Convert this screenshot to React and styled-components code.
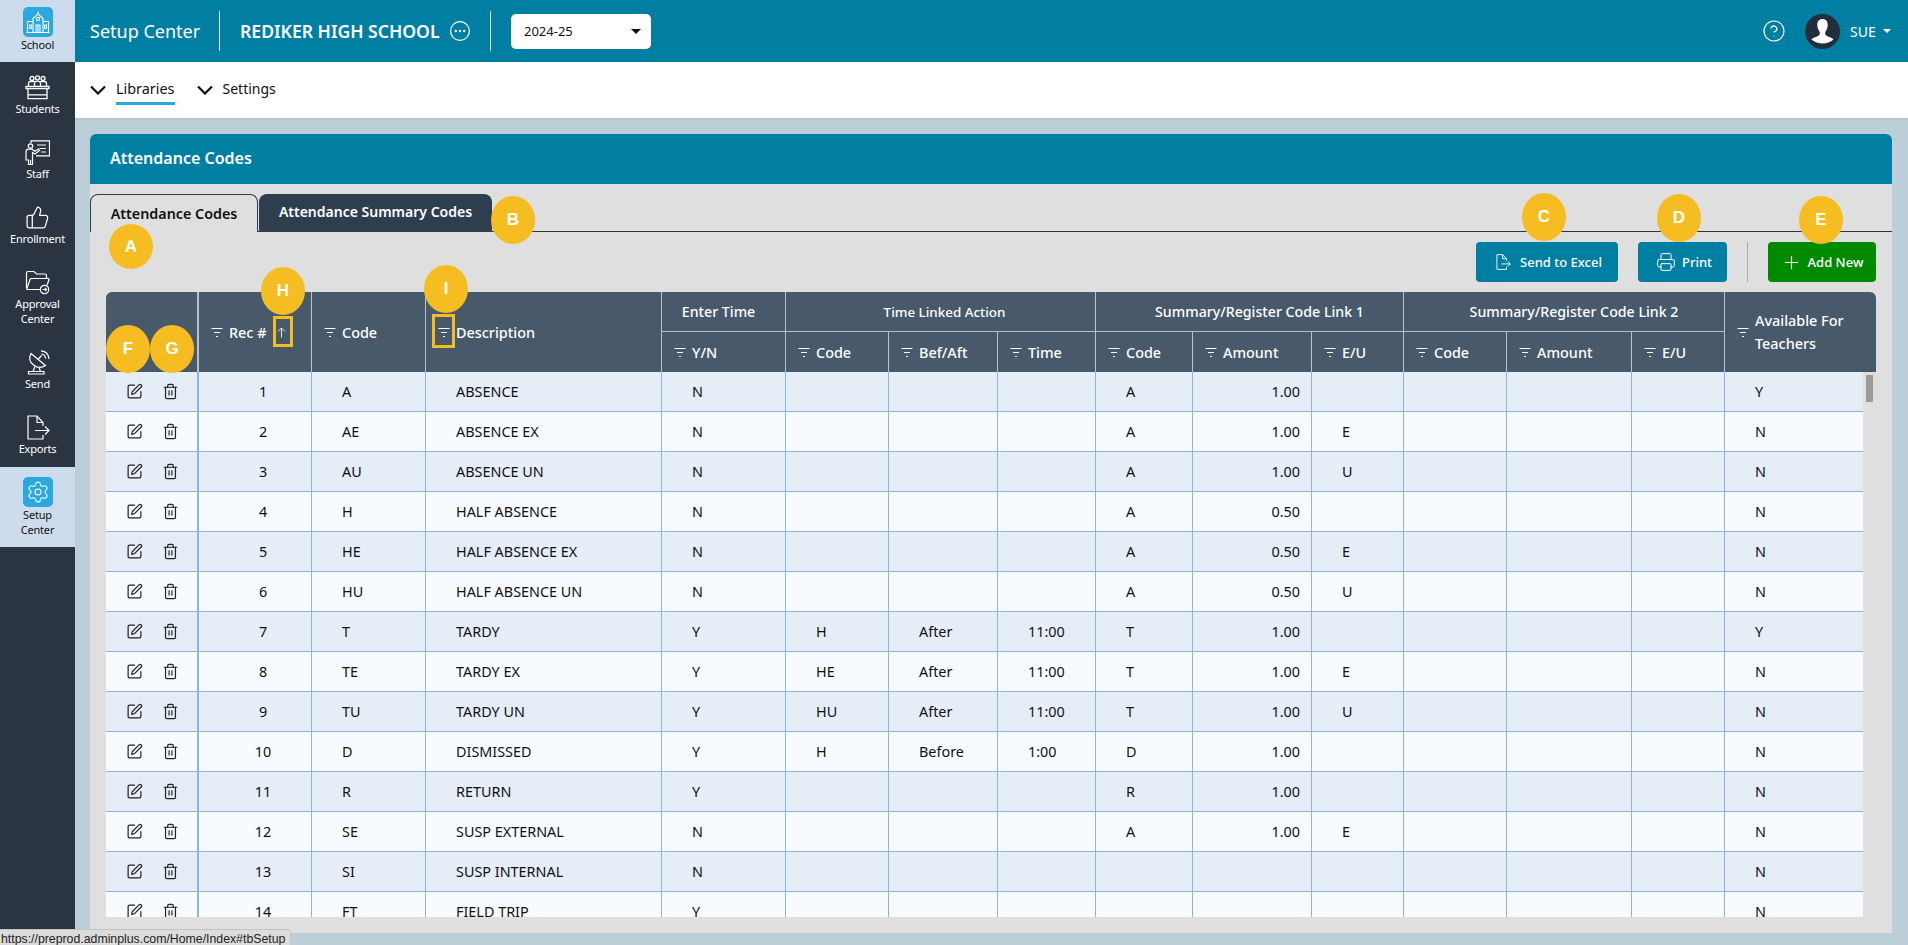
import React from 'react';
import styled, { createGlobalStyle } from 'styled-components';
import {
  CircleHelp,
  Plus,
  Printer,
  Settings,
  SquarePen,
  ThumbsUp,
  Trash2,
} from 'lucide-react';

const GlobalStyle = createGlobalStyle`
  html, body {
    margin: 0;
    padding: 0;
    height: 100%;
    overflow: hidden;
  }
  body {
    font-family: "Noto Sans", "Open Sans", sans-serif;
    font-size: 13px;
    color: #111;
  }
  * {
    box-sizing: border-box;
  }
`;

const Page = styled.div`
  position: relative;
  display: flex;
  width: 1908px;
  height: 945px;
  overflow: hidden;
  background: #bccfd8;
`;

const Sidebar = styled.nav`
  width: 75px;
  flex: none;
  background: #2a3541;
  display: flex;
  flex-direction: column;
`;

const NavItem = styled.div`
  display: flex;
  flex-direction: column;
  align-items: center;
  padding: ${p => (p.$top ? `${p.$top}px` : '13px')} 0 ${p => (p.$active ? 10 : 11)}px;
  background: ${p => (p.$active ? '#cddcec' : 'transparent')};
  color: ${p => (p.$active ? '#111' : '#fff')};
`;

const NavIconBox = styled.div`
  width: ${p => (p.$active ? 30 : 25)}px;
  height: ${p => (p.$active ? 30 : 25)}px;
  margin-bottom: ${p => (p.$active ? 0 : 1)}px;
  display: flex;
  align-items: center;
  justify-content: center;
  border-radius: 5px;
  color: #fff;
  background: ${p => (p.$active ? '#29a9e0' : 'transparent')};
`;

const NavLabel = styled.div`
  font-size: 11px;
  line-height: 15px;
  text-align: center;
  letter-spacing: -0.2px;
`;

const Main = styled.div`
  flex: 1;
  min-width: 0;
  display: flex;
  flex-direction: column;
`;

const TopBar = styled.header`
  height: 62px;
  flex: none;
  background: #007fa3;
  color: #fff;
  display: flex;
  align-items: center;
  padding: 0 17px 0 15px;
`;

const PageName = styled.div`
  font-size: 18px;
  width: 129px;
  white-space: nowrap;
`;

const BarDivider = styled.div`
  width: 1px;
  height: 40px;
  flex: none;
  background: #e6f2f6;
  margin: 0 ${p => p.$right}px 0 ${p => p.$left}px;
`;

const SchoolName = styled.div`
  font-size: 17.6px;
  font-weight: 600;
  width: 208px;
  white-space: nowrap;
`;

const YearSelect = styled.div`
  width: 140px;
  height: 35px;
  background: #fff;
  border-radius: 5px;
  color: #111;
  font-size: 13px;
  display: flex;
  align-items: center;
  justify-content: space-between;
  padding: 0 10px 0 13px;
`;

const Caret = styled.span`
  width: 0;
  height: 0;
  border-left: ${p => p.$size}px solid transparent;
  border-right: ${p => p.$size}px solid transparent;
  border-top: ${p => p.$size}px solid ${p => p.$color};
`;

const TopRight = styled.div`
  margin-left: auto;
  display: flex;
  align-items: center;
`;

const Avatar = styled.svg`
  width: 35px;
  height: 35px;
  margin: 0 10px 0 19px;
`;

const UserName = styled.span`
  font-size: 14px;
  width: 27px;
  margin-right: 6px;
  white-space: nowrap;
`;

const SubNav = styled.div`
  height: 58px;
  flex: none;
  background: #fff;
  border-bottom: 2px solid #b4c6cf;
  display: flex;
  align-items: flex-start;
  padding: 17px 0 0 15px;
  gap: 22px;
`;

const SubGroup = styled.div`
  display: flex;
  align-items: flex-start;
  gap: 10px;
`;

const Chevron = styled.svg`
  width: 16px;
  height: 10px;
  margin-top: 6px;
  flex: none;
`;

const SubLabel = styled.div`
  font-size: ${p => (p.$active ? 14.4 : 14)}px;
  line-height: 20px;
  height: 26px;
  color: #111;
  border-bottom: ${p => (p.$active ? '3px solid #29a9e0' : 'none')};
`;

const Content = styled.main`
  flex: 1;
  min-height: 0;
  padding: 14px 16px 12px 15px;
`;

const Panel = styled.section`
  height: 100%;
  background: #dfdfdf;
  display: flex;
  flex-direction: column;
  border-radius: 6px 6px 0 0;
  overflow: hidden;
`;

const PanelHead = styled.div`
  height: 50px;
  flex: none;
  background: #007fa3;
  color: #fff;
  font-size: 16px;
  font-weight: 600;
  display: flex;
  align-items: center;
  padding: 0 0 2px 20px;
`;

const TabBar = styled.div`
  height: 38px;
  flex: none;
  margin-top: 10px;
  display: flex;
  align-items: flex-end;
  gap: 1px;
  border-bottom: 1px solid #333;
`;

const Tab = styled.div`
  height: 38px;
  width: ${p => p.$width}px;
  margin-bottom: -1px;
  display: flex;
  justify-content: center;
  align-items: center;
  font-size: ${p => (p.$active ? 14.3 : 14)}px;
  font-weight: 600;
  white-space: nowrap;
  border-radius: 8px 8px 0 0;
  border: 1px solid #2e3e4f;
  border-bottom: none;
  background: ${p => (p.$active ? '#dfdfdf' : '#2e3e4f')};
  color: ${p => (p.$active ? '#111' : '#fff')};
  padding-bottom: ${p => (p.$active ? 0 : 4)}px;
`;

const Actions = styled.div`
  height: 40px;
  flex: none;
  margin-top: 10px;
  padding-right: 16px;
  display: flex;
  justify-content: flex-end;
  align-items: stretch;
`;

const ActionButton = styled.div`
  width: ${p => p.$width}px;
  background: ${p => (p.$green ? '#008a00' : '#007fa3')};
  color: #fff;
  border-radius: 4px;
  font-size: 13px;
  font-weight: 500;
  display: flex;
  align-items: center;
  justify-content: center;
  gap: ${p => p.$gap}px;
  padding-left: ${p => (p.$green ? 0 : 3)}px;
  margin-left: ${p => p.$left || 0}px;
`;

const ActionDivider = styled.div`
  width: 1px;
  background: #aaa;
  margin-left: 20px;
`;

const TableArea = styled.div`
  flex: 1;
  min-height: 0;
  margin: 10px 16px 16px;
  display: flex;
  flex-direction: column;
`;

const HeadTable = styled.table`
  width: 1770px;
  table-layout: fixed;
  border-collapse: separate;
  border-spacing: 0;
  background: #47596b;
  border-radius: 6px 6px 0 0;
  flex: none;
`;

const Th = styled.th`
  height: ${p => p.$height}px;
  padding: 0 0 0 12px;
  color: #fff;
  font-size: 14.4px;
  font-weight: 500;
  text-align: left;
  border-right: ${p => (p.$last ? 'none' : `${p.$wide ? 2 : 1}px solid #b9c1c9`)};
`;

const GroupTh = styled.th`
  height: 40px;
  padding: 0 ${p => (p.$shift < 0 ? -p.$shift : 0)}px 0 ${p => (p.$shift > 0 ? p.$shift : 0)}px;
  color: #fff;
  font-size: ${p => p.$size || 14.2}px;
  font-weight: 500;
  text-align: center;
  border-right: 1px solid #b9c1c9;
  border-bottom: 1px solid #b9c1c9;
`;

const ThInner = styled.div`
  display: flex;
  align-items: center;
  gap: 6px;
`;

const ThText = styled.span`
  line-height: 23px;
`;

const BodyWrap = styled.div`
  flex: 1;
  min-height: 0;
  overflow: hidden;
  position: relative;
  background: #dfdfdf;
`;

const BodyTable = styled.table`
  width: 1757px;
  table-layout: fixed;
  border-collapse: separate;
  border-spacing: 0;
`;

const Row = styled.tr`
  background: ${p => (p.$odd ? '#e5edf7' : '#f7fbff')};
`;

const Td = styled.td`
  height: 40px;
  padding: 0 ${p => (p.$right ? 11 : 0)}px 0 ${p => (p.$right ? 0 : p.$center ? 16 : 30)}px;
  font-size: 14.4px;
  color: #111;
  text-align: ${p => (p.$right ? 'right' : p.$center ? 'center' : 'left')};
  border-right: ${p => (p.$last ? 'none' : `${p.$wide ? 2 : 1}px solid #8fb4dc`)};
  border-bottom: 1px solid #8fb4dc;
`;

const ToolCell = styled(Td)`
  padding: 0;
`;

const RowTools = styled.div`
  display: flex;
  align-items: center;
  padding-left: 20px;
  gap: 19px;
  color: #222;
`;

const ScrollThumb = styled.div`
  position: absolute;
  top: 3px;
  right: 3px;
  width: 7px;
  height: 27px;
  background: #9a9a9a;
`;

const Badge = styled.div`
  position: absolute;
  left: ${p => p.$x}px;
  top: ${p => p.$y}px;
  width: 44px;
  height: ${p => p.$h}px;
  border-radius: 50%;
  background: #f5bd21;
  color: #fff;
  font-family: "Liberation Sans", Arial, sans-serif;
  font-size: 17px;
  font-weight: 700;
  display: flex;
  align-items: center;
  justify-content: center;
`;

const Highlight = styled.div`
  position: absolute;
  left: ${p => p.$x}px;
  top: ${p => p.$y}px;
  width: ${p => p.$w}px;
  height: ${p => p.$h}px;
  border: 3px solid #f5bd21;
`;

const StatusBar = styled.div`
  position: absolute;
  left: 0;
  bottom: 0;
  width: 291px;
  height: 16px;
  padding-left: 1px;
  background: #dcdcdc;
  border: 1px solid #c4c4c4;
  border-left: none;
  border-bottom: none;
  border-radius: 0 4px 0 0;
  font-family: "Liberation Sans", Arial, sans-serif;
  font-size: 12.3px;
  line-height: 18px;
  color: #222;
  white-space: nowrap;
  overflow: hidden;
`;

const SchoolIcon = () => (
  <svg width="24" height="24" viewBox="0 0 24 24" fill="none" stroke="#fff" strokeWidth="1.1">
    <path d="M1.5 22V11.5h5.5M22.5 22V11.5H17" />
    <path d="M7 22V8.5l5-4.5 5 4.5V22" />
    <path d="M12 4V1.5" />
    <circle cx="12" cy="9" r="1.6" />
    <path d="M.5 22.5h23M10 22v-7h4v7M12 15v7M3.5 15h1.8v3.5H3.5zM18.7 15h1.8v3.5h-1.8z" />
  </svg>
);

const StudentsIcon = () => (
  <svg width="25" height="25" viewBox="0 0 25 25" fill="none" stroke="#fff" strokeWidth="1.3">
    <circle cx="7" cy="3.5" r="2" />
    <circle cx="12.5" cy="2.8" r="2" />
    <circle cx="18" cy="3.5" r="2" />
    <path d="M3.5 11V8.5q0-2 2-2h3q1 0 1.5.6.6-1 2.5-1t2.5 1q.5-.6 1.5-.6h3q2 0 2 2V11" />
    <path d="M9.5 8v3M15.5 8v3" />
    <path d="M1 11.5h23v2.2H1zM3 13.7v10h19v-10M3 19.8h19" />
  </svg>
);

const StaffIcon = () => (
  <svg width="25" height="25" viewBox="0 0 25 25" fill="none" stroke="#fff" strokeWidth="1.2">
    <path d="M6 3V.8h18.5v15H11" />
    <path d="M12 5h9M14.5 8.5H21M16 12h5" />
    <circle cx="5.5" cy="6" r="2.2" />
    <path d="M1 20V12q0-2.8 2.5-2.8H7l3 2 3.5-2.2 1 1.4L10 14l-2.5-1.5V24.5H3.5V20H1z" />
    <path d="M5.5 20v4.5" />
  </svg>
);

const FolderIcon = () => (
  <svg width="25" height="25" viewBox="0 0 25 25" fill="none" stroke="#fff" strokeWidth="1.2">
    <path d="M1.5 18V3q0-1.5 1.5-1.5h6l2.5 2.5H20q1.5 0 1.5 1.5V8" />
    <path d="M1.5 19.5 5 9.5q.4-1 1.5-1H23q1.3 0 1 1.3l-2 5.2M1.5 19.5H15" />
    <circle cx="19.5" cy="19.5" r="4.2" />
    <path d="M17.5 19.5h4M20 18l1.5 1.5L20 21" />
  </svg>
);

const DishIcon = () => (
  <svg width="25" height="25" viewBox="0 0 25 25" fill="none" stroke="#fff" strokeWidth="1.2">
    <path d="M6 3.5Q2.5 10.5 8.5 15T20.5 15.5z" />
    <path d="M13 9.5l3.5-4" />
    <path d="M16 .8q7.5.7 8 8.2M16.5 4q3.7.5 4.200 4.500" />
    <path d="M10 16.5 8 21.5M14 17.5l1.5 4" />
    <path d="M3.5 21.5h15.5v2.5H3.5z" />
  </svg>
);

const FileOutIcon = ({ size = 25, stroke = 1.2 }) => (
  <svg width={size} height={size} viewBox="0 0 25 25" fill="none" stroke="#fff" strokeWidth={stroke}>
    <path d="M18 11V7.5L12 1H3v23h15v-4" />
    <path d="M12 1v6.5h6" />
    <path d="M10 15.5h14M20 11.5l4 4-4 4" />
  </svg>
);

const DotsIcon = () => (
  <svg width="24" height="24" viewBox="0 0 24 24" fill="none" style={{ flex: 'none' }}>
    <circle cx="12" cy="12" r="9.4" stroke="#fff" strokeWidth="1.2" />
    <circle cx="7.8" cy="12" r="1.2" fill="#fff" />
    <circle cx="12" cy="12" r="1.2" fill="#fff" />
    <circle cx="16.2" cy="12" r="1.2" fill="#fff" />
  </svg>
);

const SubChevron = () => (
  <Chevron viewBox="0 0 16 10" fill="none" stroke="#111" strokeWidth="2.2">
    <path d="M1 1.500l7 7 7-7" />
  </Chevron>
);

const FilterIcon = () => (
  <svg width="12" height="11" viewBox="0 0 12 11" fill="none" stroke="#fff" strokeWidth="1" style={{ flex: 'none' }}>
    <path d="M.5 1.5h11M3 5.5h6M5 9.5h2" />
  </svg>
);

const SortArrow = () => (
  <svg width="9" height="11" viewBox="0 0 9 11" fill="none" stroke="#dfe5ea" strokeWidth="1" style={{ flex: 'none', marginLeft: 5 }}>
    <path d="M4.5 10.5V1M1 4.5l3.5-3.5L8 4.5" />
  </svg>
);

const headWidths = [93, 113, 114, 236, 124, 103, 109, 98, 97, 119, 92, 103, 125, 93, 151];
const bodyWidths = [...headWidths.slice(0, 14), 138];

const rows = [
  [1, 'A', 'ABSENCE', 'N', '', '', '', 'A', '1.00', '', '', '', '', 'Y'],
  [2, 'AE', 'ABSENCE EX', 'N', '', '', '', 'A', '1.00', 'E', '', '', '', 'N'],
  [3, 'AU', 'ABSENCE UN', 'N', '', '', '', 'A', '1.00', 'U', '', '', '', 'N'],
  [4, 'H', 'HALF ABSENCE', 'N', '', '', '', 'A', '0.50', '', '', '', '', 'N'],
  [5, 'HE', 'HALF ABSENCE EX', 'N', '', '', '', 'A', '0.50', 'E', '', '', '', 'N'],
  [6, 'HU', 'HALF ABSENCE UN', 'N', '', '', '', 'A', '0.50', 'U', '', '', '', 'N'],
  [7, 'T', 'TARDY', 'Y', 'H', 'After', '11:00', 'T', '1.00', '', '', '', '', 'Y'],
  [8, 'TE', 'TARDY EX', 'Y', 'HE', 'After', '11:00', 'T', '1.00', 'E', '', '', '', 'N'],
  [9, 'TU', 'TARDY UN', 'Y', 'HU', 'After', '11:00', 'T', '1.00', 'U', '', '', '', 'N'],
  [10, 'D', 'DISMISSED', 'Y', 'H', 'Before', '1:00', 'D', '1.00', '', '', '', '', 'N'],
  [11, 'R', 'RETURN', 'Y', '', '', '', 'R', '1.00', '', '', '', '', 'N'],
  [12, 'SE', 'SUSP EXTERNAL', 'N', '', '', '', 'A', '1.00', 'E', '', '', '', 'N'],
  [13, 'SI', 'SUSP INTERNAL', 'N', '', '', '', '', '', '', '', '', '', 'N'],
  [14, 'FT', 'FIELD TRIP', 'Y', '', '', '', '', '', '', '', '', '', 'N'],
];

const subColumns = ['Y/N', 'Code', 'Bef/Aft', 'Time', 'Code', 'Amount', 'E/U', 'Code', 'Amount', 'E/U'];

const badges = [
  ['A', 109, 224, 45],
  ['B', 491, 196, 48],
  ['C', 1522, 193, 48],
  ['D', 1657, 194, 48],
  ['E', 1799, 196, 48],
  ['F', 106, 325, 48],
  ['G', 150, 325, 48],
  ['H', 261, 267, 48],
  ['I', 424, 265, 48],
];

const Filtered = ({ children }) => (
  <ThInner>
    <FilterIcon />
    <ThText>{children}</ThText>
  </ThInner>
);

const Cols = ({ widths }) => (
  <colgroup>
    {widths.map((w, i) => (
      <col key={i} width={w} />
    ))}
  </colgroup>
);

const App = () => {
  return (
    <Page>
      <GlobalStyle />
      <Sidebar>
        <NavItem $active $top={7}>
          <NavIconBox $active><SchoolIcon /></NavIconBox>
          <NavLabel>School</NavLabel>
        </NavItem>
        <NavItem>
          <NavIconBox><StudentsIcon /></NavIconBox>
          <NavLabel>Students</NavLabel>
        </NavItem>
        <NavItem>
          <NavIconBox><StaffIcon /></NavIconBox>
          <NavLabel>Staff</NavLabel>
        </NavItem>
        <NavItem>
          <NavIconBox><ThumbsUp size={25} strokeWidth={1.2} /></NavIconBox>
          <NavLabel>Enrollment</NavLabel>
        </NavItem>
        <NavItem>
          <NavIconBox><FolderIcon /></NavIconBox>
          <NavLabel>Approval<br />Center</NavLabel>
        </NavItem>
        <NavItem>
          <NavIconBox><DishIcon /></NavIconBox>
          <NavLabel>Send</NavLabel>
        </NavItem>
        <NavItem>
          <NavIconBox><FileOutIcon /></NavIconBox>
          <NavLabel>Exports</NavLabel>
        </NavItem>
        <NavItem $active $top={10}>
          <NavIconBox $active><Settings size={24} strokeWidth={1.1} /></NavIconBox>
          <NavLabel>Setup<br />Center</NavLabel>
        </NavItem>
      </Sidebar>

      <Main>
        <TopBar>
          <PageName>Setup Center</PageName>
          <BarDivider $left={0} $right={20} />
          <SchoolName>REDIKER HIGH SCHOOL</SchoolName>
          <DotsIcon />
          <BarDivider $left={18} $right={20} />
          <YearSelect>
            2024-25
            <Caret $size={5} $color="#111" />
          </YearSelect>
          <TopRight>
            <CircleHelp size={24} strokeWidth={1.2} />
            <Avatar viewBox="0 0 35 35">
              <circle cx="17.5" cy="17.5" r="17.5" fill="#222e3a" />
              <path
                d="M17.5 5c3.6 0 5.4 2.6 5.2 6.2-.2 3.2-1.3 5.2-2.2 6.4-.5.8-.4 2.4 0 3.2.9 1.6 6.6 2.8 8 4.6a17 17 0 0 1-22 0c1.4-1.8 7.1-3 8-4.6.4-.8.5-2.4 0-3.2-.9-1.2-2-3.2-2.2-6.4C12.1 7.6 13.9 5 17.5 5z"
                fill="#fff"
              />
            </Avatar>
            <UserName>SUE</UserName>
            <Caret $size={4} $color="#fff" />
          </TopRight>
        </TopBar>

        <SubNav>
          <SubGroup>
            <SubChevron />
            <SubLabel $active>Libraries</SubLabel>
          </SubGroup>
          <SubGroup>
            <SubChevron />
            <SubLabel>Settings</SubLabel>
          </SubGroup>
        </SubNav>

        <Content>
          <Panel>
            <PanelHead>Attendance Codes</PanelHead>
            <TabBar>
              <Tab $active $width={168}>Attendance Codes</Tab>
              <Tab $width={233}>Attendance Summary Codes</Tab>
            </TabBar>
            <Actions>
              <ActionButton $width={142} $gap={9}>
                <FileOutIcon size={16} stroke={1.4} />
                Send to Excel
              </ActionButton>
              <ActionButton $width={89} $gap={6} $left={20}>
                <Printer size={20} strokeWidth={1.2} />
                Print
              </ActionButton>
              <ActionDivider />
              <ActionButton $width={108} $gap={6} $green $left={20}>
                <Plus size={21} strokeWidth={1.3} />
                Add New
              </ActionButton>
            </Actions>
            <TableArea>
              <HeadTable>
                <Cols widths={headWidths} />
                <thead>
                  <tr>
                    <Th rowSpan={2} $height={80} $wide />
                    <Th rowSpan={2}>
                      <ThInner>
                        <FilterIcon />
                        <ThText>Rec #</ThText>
                        <SortArrow />
                      </ThInner>
                    </Th>
                    <Th rowSpan={2}><Filtered>Code</Filtered></Th>
                    <Th rowSpan={2}><Filtered>Description</Filtered></Th>
                    <GroupTh $shift={-10}>Enter Time</GroupTh>
                    <GroupTh colSpan={3} $shift={8} $size={13.4}>Time Linked Action</GroupTh>
                    <GroupTh colSpan={3} $shift={20}>Summary/Register Code Link 1</GroupTh>
                    <GroupTh colSpan={3} $shift={20}>Summary/Register Code Link 2</GroupTh>
                    <Th rowSpan={2} $last>
                      <Filtered>Available For<br />Teachers</Filtered>
                    </Th>
                  </tr>
                  <tr>
                    {subColumns.map((name, i) => (
                      <Th key={i} $height={40}><Filtered>{name}</Filtered></Th>
                    ))}
                  </tr>
                </thead>
              </HeadTable>
              <BodyWrap>
                <BodyTable>
                  <Cols widths={bodyWidths} />
                  <tbody>
                    {rows.map((r, i) => (
                      <Row key={r[0]} $odd={i % 2 === 0}>
                        <ToolCell $wide>
                          <RowTools>
                            <SquarePen size={17} strokeWidth={1.7} />
                            <Trash2 size={17} strokeWidth={1.7} />
                          </RowTools>
                        </ToolCell>
                        <Td $center>{r[0]}</Td>
                        {r.slice(1).map((value, j) => (
                          <Td key={j} $right={j === 7 || j === 10} $last={j === 12}>{value}</Td>
                        ))}
                      </Row>
                    ))}
                  </tbody>
                </BodyTable>
                <ScrollThumb />
              </BodyWrap>
            </TableArea>
          </Panel>
        </Content>
      </Main>

      {badges.map(([letter, x, y, h]) => (
        <Badge key={letter} $x={x} $y={y} $h={h}>{letter}</Badge>
      ))}
      <Highlight $x={273} $y={316} $w={20} $h={31} />
      <Highlight $x={432} $y={314} $w={23} $h={34} />
      <StatusBar>https://preprod.adminplus.com/Home/Index#tbSetup</StatusBar>
    </Page>
  );
};

export default App;
